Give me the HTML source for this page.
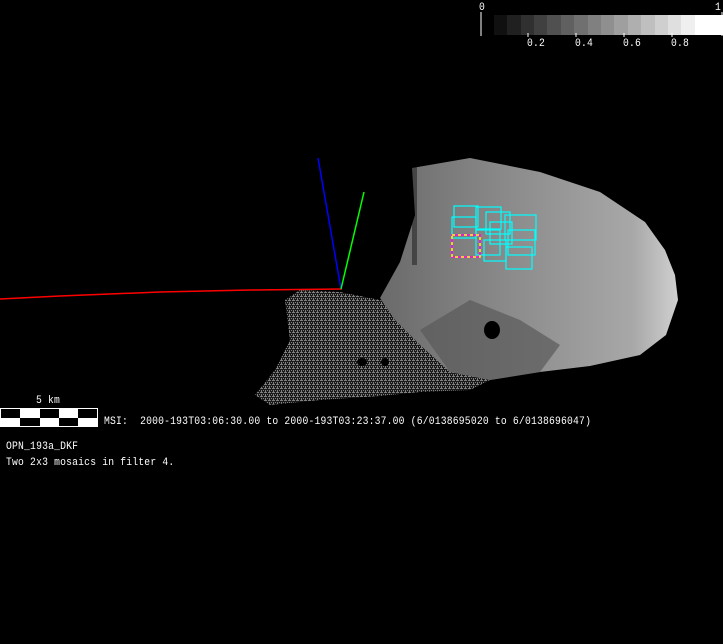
<!DOCTYPE html>
<html><head><style>
html,body{margin:0;padding:0;background:#000;width:723px;height:644px;overflow:hidden}
.t{position:absolute;color:#fff;font-family:"Liberation Mono",monospace;font-size:9.7px;letter-spacing:0.2px;white-space:pre;line-height:12px;transform:scaleY(1.15);transform-origin:0 0}
</style></head><body>
<svg width="723" height="644" style="position:absolute;left:0;top:0">
<defs>
<linearGradient id="g" x1="0" y1="0" x2="1" y2="0">
<stop offset="0" stop-color="#6a6a6a"/><stop offset="0.45" stop-color="#8c8c8c"/><stop offset="0.85" stop-color="#a8a8a8"/><stop offset="1" stop-color="#d0d0d0"/>
</linearGradient>
<pattern id="p" width="4" height="4" patternUnits="userSpaceOnUse"><rect width="4" height="4" fill="#1a1a1a"/><path d="M0 0h3v1h-3zM1 2h1v2h-1zM3 2h1v1h-1z" fill="#808080"/></pattern>
</defs>
<path d="M300 290 L340 292 L380 300 L430 320 L470 345 L490 380 L470 390 L420 392 L380 396 L320 400 L270 405 L255 395 L275 370 L290 340 L285 300Z" fill="url(#p)"/>
<path d="M412 168 L470 158 L540 172 L600 192 L645 222 L665 250 L675 275 L678 300 L666 335 L640 355 L590 366 L540 372 L490 380 L450 372 L420 345 L395 320 L380 298 L400 262 L415 215Z" fill="url(#g)"/>
<path d="M420 330 L470 300 L520 320 L560 345 L540 372 L490 380 L450 372Z" fill="#5a5a5a" opacity="0.7"/>
<ellipse cx="492" cy="330" rx="8" ry="9" fill="#000"/>
<ellipse cx="362" cy="362" rx="5" ry="4" fill="#000"/>
<ellipse cx="385" cy="362" rx="4" ry="4" fill="#000"/>
<rect x="412" y="165" width="5" height="100" fill="#000" opacity="0.4"/>
<polyline points="0,299 60,296 160,292 250,290 342,289" fill="none" stroke="#f00" stroke-width="1.5"/>
<line x1="318" y1="158" x2="341" y2="289" stroke="#00f" stroke-width="1.5"/>
<line x1="364" y1="192" x2="341" y2="289" stroke="#0f0" stroke-width="1.5"/>
<g fill="none" stroke="#0ff" stroke-width="1.2">
<rect x="454" y="206" width="24" height="21"/><rect x="452" y="217" width="24" height="21"/>
<rect x="476" y="207" width="25" height="22"/><rect x="486" y="212" width="24" height="22"/>
<rect x="490" y="222" width="22" height="22"/><rect x="476" y="230" width="24" height="25"/>
<rect x="505" y="215" width="31" height="25"/><rect x="508" y="230" width="27" height="25"/>
<rect x="506" y="247" width="26" height="22"/><rect x="484" y="240" width="22" height="21"/>
</g>
<rect x="452" y="235" width="28" height="22" fill="none" stroke="#f0f" stroke-width="1.5"/>
<rect x="452" y="235" width="28" height="22" fill="none" stroke="#ff0" stroke-width="1.5" stroke-dasharray="3,3"/>
<g>
<rect x="494" y="15" width="14" height="20" fill="#101010"/><rect x="507" y="15" width="14" height="20" fill="#202020"/>
<rect x="521" y="15" width="14" height="20" fill="#303030"/><rect x="534" y="15" width="14" height="20" fill="#404040"/>
<rect x="547" y="15" width="14" height="20" fill="#505050"/><rect x="561" y="15" width="14" height="20" fill="#606060"/>
<rect x="574" y="15" width="14" height="20" fill="#707070"/><rect x="588" y="15" width="14" height="20" fill="#808080"/>
<rect x="601" y="15" width="14" height="20" fill="#8f8f8f"/><rect x="614" y="15" width="14" height="20" fill="#9f9f9f"/>
<rect x="628" y="15" width="14" height="20" fill="#afafaf"/><rect x="641" y="15" width="14" height="20" fill="#bfbfbf"/>
<rect x="655" y="15" width="14" height="20" fill="#cfcfcf"/><rect x="668" y="15" width="14" height="20" fill="#dfdfdf"/>
<rect x="681" y="15" width="14" height="20" fill="#efefef"/><rect x="695" y="15" width="28" height="20" fill="#fff"/>
</g>
<line x1="481" y1="12" x2="481" y2="36" stroke="#fff"/>
<line x1="722" y1="12" x2="722" y2="36" stroke="#fff"/>
<g stroke="#fff"><line x1="528" y1="33" x2="528" y2="37"/><line x1="576" y1="33" x2="576" y2="37"/><line x1="624" y1="33" x2="624" y2="37"/><line x1="672" y1="33" x2="672" y2="37"/></g>
<rect x="0" y="408" width="98" height="19" fill="#fff"/>
<g fill="#000"><rect x="1" y="409" width="19" height="9"/><rect x="40" y="409" width="19" height="9"/><rect x="78" y="409" width="19" height="9"/>
<rect x="20" y="418" width="20" height="8"/><rect x="59" y="418" width="19" height="8"/></g>
</svg>
<div class="t" style="left:479px;top:1px">0</div>
<div class="t" style="left:715px;top:1px">1</div>
<div class="t" style="left:527px;top:37px">0.2</div>
<div class="t" style="left:575px;top:37px">0.4</div>
<div class="t" style="left:623px;top:37px">0.6</div>
<div class="t" style="left:671px;top:37px">0.8</div>
<div class="t" style="left:36px;top:394px">5 km</div>
<div class="t" style="left:104px;top:415px">MSI:  2000-193T03:06:30.00 to 2000-193T03:23:37.00 (6/0138695020 to 6/0138696047)</div>
<div class="t" style="left:6px;top:440px">OPN_193a_DKF</div>
<div class="t" style="left:6px;top:456px">Two 2x3 mosaics in filter 4.</div>
</body></html>
